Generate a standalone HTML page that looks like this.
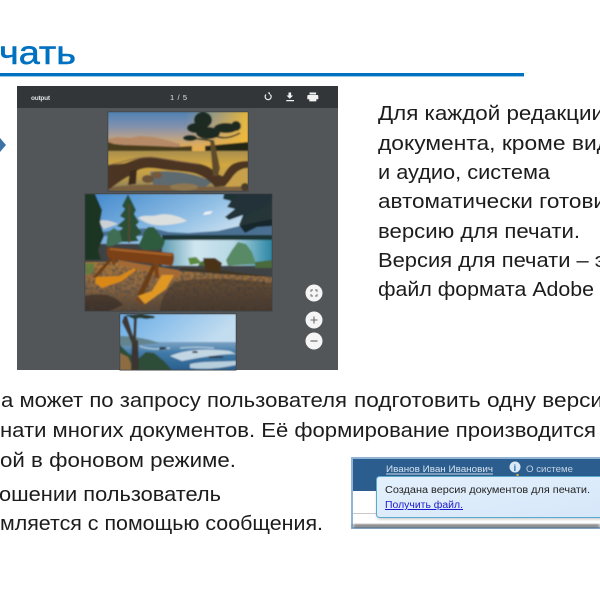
<!DOCTYPE html>
<html><head><meta charset="utf-8"><style>
html,body{margin:0;padding:0;background:#fff;width:600px;height:600px;overflow:hidden}
svg{display:block}
text{font-family:"Liberation Sans",sans-serif}
.t{font-size:20.5px;fill:#1c1c1c;filter:url(#tb)}
</style></head><body>
<svg width="600" height="600" viewBox="0 0 600 600" xmlns="http://www.w3.org/2000/svg">
<defs>
<filter id="tb" x="-2%" y="-20%" width="104%" height="140%"><feGaussianBlur stdDeviation="0.3"/></filter>
<filter id="b" x="-5%" y="-5%" width="110%" height="110%"><feGaussianBlur stdDeviation="0.7"/></filter>
<filter id="sh" x="-5%" y="-30%" width="110%" height="160%"><feGaussianBlur stdDeviation="1.5"/></filter>
<filter id="n" x="0" y="0" width="100%" height="100%"><feTurbulence type="fractalNoise" baseFrequency=".32" numOctaves="2" seed="4"/><feColorMatrix values="0 0 0 0 .1 0 0 0 0 .08 0 0 0 0 .06 0 0 0 3 -1.2"/></filter>
<linearGradient id="s1" x1="0" y1="0" x2="0" y2="1"><stop offset="0" stop-color="#4f82b4"/><stop offset=".35" stop-color="#7f90ad"/><stop offset=".62" stop-color="#b2a08e"/><stop offset=".85" stop-color="#dcaa5c"/><stop offset="1" stop-color="#e8ae48"/></linearGradient>
<linearGradient id="s1b" x1="0" y1="0" x2="1" y2="0"><stop offset=".55" stop-color="#f0b040" stop-opacity="0"/><stop offset="1" stop-color="#f6bd30" stop-opacity=".9"/></linearGradient>
<linearGradient id="w1" x1="0" y1="0" x2="0" y2="1"><stop offset="0" stop-color="#a88e4e"/><stop offset=".35" stop-color="#d3a740"/><stop offset=".7" stop-color="#b89a4c"/><stop offset="1" stop-color="#7c7460"/></linearGradient>
<linearGradient id="s2" x1="0" y1="0" x2="1" y2="0.5"><stop offset="0" stop-color="#3f86cc"/><stop offset=".6" stop-color="#8dbde4"/><stop offset="1" stop-color="#d5e6f2"/></linearGradient>
<linearGradient id="w2" x1="0" y1="0" x2="1" y2="0"><stop offset="0" stop-color="#5c9ab0"/><stop offset=".3" stop-color="#cfe6f0"/><stop offset=".65" stop-color="#b6d8e4"/><stop offset="1" stop-color="#2a86a4"/></linearGradient>
<linearGradient id="g2" x1="0" y1="0" x2="0" y2="1"><stop offset="0" stop-color="#b07836"/><stop offset=".5" stop-color="#8c6640"/><stop offset="1" stop-color="#54402f"/></linearGradient>
<linearGradient id="s3" x1="0" y1="0" x2="1" y2="0.3"><stop offset="0" stop-color="#68ace6"/><stop offset="1" stop-color="#c3ddf0"/></linearGradient>
<linearGradient id="w3" x1="0" y1="0" x2="0" y2="1"><stop offset="0" stop-color="#7ba2c4"/><stop offset=".4" stop-color="#3f78a6"/><stop offset="1" stop-color="#2a5f8e"/></linearGradient>
<linearGradient id="note" x1="0" y1="0" x2="1" y2="1"><stop offset="0" stop-color="#e4f0fc"/><stop offset="1" stop-color="#d6e7f9"/></linearGradient>
<clipPath id="c1"><rect x="108" y="112" width="140" height="79"/></clipPath>
<clipPath id="c2"><rect x="85" y="194" width="187" height="117"/></clipPath>
<clipPath id="c3"><rect x="120" y="314" width="116" height="56"/></clipPath>
<clipPath id="gr"><path d="M85 263l30 0 60 8 97 6v34H85z"/></clipPath>
</defs>

<!-- title -->
<text x="-1" y="64" font-size="33" fill="#0070c0" stroke="#0070c0" stroke-width=".5" textLength="77" lengthAdjust="spacingAndGlyphs">чать</text>
<rect x="0" y="73" width="524" height="3.4" fill="#0070c0"/>
<path d="M0 138 L6 145 L0 152Z" fill="#3d72a8"/>

<!-- viewer -->
<rect x="17" y="86" width="321" height="284" fill="#525659"/>
<rect x="17" y="86" width="321" height="22" fill="#323639"/>
<text x="31" y="100" font-size="6.5" font-weight="bold" fill="#e0e0e0" textLength="19">output</text>
<text x="170" y="100" font-size="7.5" fill="#e4e4e4" textLength="17" xml:space="preserve">1 / 5</text>
<g fill="none" stroke="#eee" stroke-width="1.2"><path d="M270.3 94.6 A3 3 0 1 1 266 94.6"/></g>
<path d="M267.5 92.5 L270 92.5 L270 95Z" fill="#eee"/>
<path d="M288.5 92.5h2.6v3h2l-3.3 3.2-3.3-3.2h2zM286.3 100h7.7v1.2h-7.7z" fill="#f2f2f2"/>
<path d="M309.5 92.5h6.6v2h-6.6zM308.3 95h9c.6 0 1 .4 1 1v3.2h-2v2.2h-7v-2.2h-2V96c0-.6.4-1 1-1z" fill="#f2f2f2"/>

<!-- photo 1 -->
<rect x="107.5" y="111.5" width="141" height="80" fill="#3f4245"/>
<g clip-path="url(#c1)"><g filter="url(#b)">
<rect x="108" y="112" width="140" height="40" fill="url(#s1)"/>
<rect x="108" y="112" width="140" height="40" fill="url(#s1b)"/>
<path d="M108 139l10-2 12 1 10-2 14 1 12 3 14 4v6H108z" fill="#b68a66"/>
<path d="M108 142l6 2 10 1 30 1 22 1 16-1v5H108z" fill="#4a3d1c"/>
<path d="M205 146l43-4v9h-43z" fill="#232818"/>
<rect x="108" y="151" width="140" height="40" fill="url(#w1)"/>
<path d="M150 172c18-2 44 0 62 10l-8 6h-50z" fill="#5d6a70"/>
<path d="M222 172c8-2 18-4 26-3v18h-22z" fill="#c8a04c"/>
<path d="M108 188c14-3 36-4 58-3 20 1 50 3 82 1v5H108z" fill="#7a6040"/>
<path d="M108 165c8-1 14-1 18-2 8-3 16-6 24-6 10 0 24 5 36 5 10 1 20 2 27 8 4 3 7 6 10 6 3-5 6-10 10-12 4-2 9-3 15-3v7c-6 0-11 3-15 8-3 4-5 7-8 10l-10 1c-4-5-10-10-18-13-8-3-24-3-36-5-6-1-14-2-20 0-6 2-8 5-10 6-8 4-16 10-23 15z" fill="#4c3524"/>
<path d="M108 165c12-2 28-8 42-8 14 1 30 5 50 7" fill="none" stroke="#86684c" stroke-width="1"/>
<path d="M130 171l7-2-1 15-8 1z" fill="#3e2c1c"/>
<ellipse cx="157" cy="175" rx="5" ry="3.5" fill="#76583a"/><ellipse cx="148" cy="179" rx="6" ry="4" fill="#6a5238"/><ellipse cx="184" cy="187" rx="14" ry="3.5" fill="#8f7850"/><ellipse cx="245" cy="187" rx="4" ry="4" fill="#4a3a2a"/>
<path d="M210 140l4 0 6 28-2 8h-5z" fill="#5e4c2c"/>
<g fill="#1e2a20">
<ellipse cx="203" cy="120" rx="9" ry="8"/><ellipse cx="196" cy="128" rx="9" ry="5"/><ellipse cx="190" cy="138" rx="7" ry="3"/><ellipse cx="208" cy="133" rx="12" ry="6"/><ellipse cx="226" cy="128" rx="12" ry="5"/><ellipse cx="236" cy="126" rx="5" ry="5"/>
</g>
<path d="M212 135c8 3 15 5 28-2M190 138c6 1 14 1 22 3" stroke="#1e2a20" stroke-width="1.5" fill="none"/>
</g></g>

<!-- photo 2 -->
<rect x="84.5" y="193.5" width="188" height="118" fill="#3f4245"/>
<g clip-path="url(#c2)"><g filter="url(#b)">
<rect x="85" y="194" width="187" height="50" fill="url(#s2)"/>
<path d="M205 212l8-1-3 3-7 1z" fill="#f2f4f6"/>
<path d="M138 218c6-4 14-1 20-3 8-2 20 0 29 6-8 3-22 5-32 4-8-1-12-4-17-7z" fill="#ebe6dd" opacity=".85"/>
<path d="M98 221c6-2 14 0 20 3l-14 5z" fill="#e6dcd5" opacity=".8"/>
<path d="M100 232l30-3 22-1 16 4 20 1 30-2 30-7 24-5v17H100z" fill="#486f92"/>
<rect x="162" y="235" width="110" height="5" fill="#1c3436"/>
<rect x="162" y="240" width="110" height="26" fill="url(#w2)"/>
<path d="M85 194h10l7 16-2 12 4 14-6 14 3 10H85z" fill="#1b3624"/>
<path d="M128 194l5 10 3 6-2 4 5 8-3 3 6 8-6 4 3 4-11 1-11 0 4-4-5-4 7-6-6-2 8-7-5-3 5-7-3-3z" fill="#2c4f34"/>
<path d="M128.3 205h1.5v38h-1.500z" fill="#5b4632"/>
<path d="M148 227l6 0 6 8 5 6-2 6-5 3-14 0-6-4 4-8 2-6z" fill="#2e5a3c"/>
<path d="M108 232l6-4 6 4 2 10-10 4-6 0z" fill="#3f6e55"/>
<path d="M272 194h-48l-1 5 8 2-4 6 8 2-10 8 4 3 14-5-4 10 6 8 12-6 15-1z" fill="#0f1d1e" opacity=".88"/>
<path d="M232 250l6-8 8 2 6 8 4 12-28 2-2-6z" fill="#588a66"/>
<path d="M200 262c6-3 12-3 15-1l7 5H198zM255 262l17-2v8h-17z" fill="#4a6a3a"/>
<path d="M85 262h30l60 9 97 6v34H85z" fill="url(#g2)"/>
<rect x="85" y="262" width="187" height="50" filter="url(#n)" clip-path="url(#gr)"/>
<path d="M175 282c30-6 65-3 97 1v28h-112c0-10 6-22 15-29z" fill="#362b26" opacity=".5"/>
<path d="M85 296c16-4 30-1 38 9l-14 6H85z" fill="#2a2220" opacity=".55"/>
<path d="M180 268l40 2 52 7-52-3-40-4z" fill="#3e3428"/>
<path d="M203 258h12l7 5-2 8h-14z" fill="#4a3014"/>
<path d="M85 263h10l-2 10-8 2z" fill="#5c8040" opacity=".8"/>
<path d="M188 258l8-1 6 6-12 2z" fill="#5c8a3c"/>
<!-- bench -->
<path d="M108 247l65 6c2 4 1 9-1 13l-62-7c-4-3-4-9-2-12z" fill="#7c4016"/>
<path d="M110 249l62 6" stroke="#a8642a" stroke-width="2" fill="none"/>
<path d="M118 260l60 10c3 1 3 4 2 7l-2 1-60-13z" fill="#a46a36"/>
<path d="M112 256l3 1-19 21-3-1z" fill="#6a3c12"/>
<path d="M111 250l4 0 1 14-4 0z" fill="#7a4214"/>
<path d="M96 277l24-1 14-8 2 2-14 11-20 7-7-5z" fill="#d98818"/>
<path d="M153 258l5 0 1 20-4 0z" fill="#7a4214"/>
<path d="M152 265l4 1-13 30-6-1z" fill="#6a3c12"/>
<path d="M138 296l14-5 10-16 12 0-8 14-21 15z" fill="#e09820"/>
<path d="M137 297l6 7 -2 0-5-4z" fill="#7a4214"/>
</g></g>

<!-- photo 3 -->
<rect x="119.500" y="313.500" width="117" height="57" fill="#3f4245"/>
<g clip-path="url(#c3)"><g filter="url(#b)">
<rect x="120" y="314" width="116" height="30" fill="url(#s3)"/>
<rect x="120" y="342" width="116" height="28" fill="url(#w3)"/>
<path d="M120 336c10 0 22 2 30 4l10 3-30 3-10 0z" fill="#63848f"/>
<path d="M170 356c14-6 34-8 60-5l6 3c-14 0-24 2-38 4l-16 3z" fill="#dbe7ef" opacity=".85"/>
<path d="M190 364c14-3 24-2 46-3v4c-14 3-30 5-46 3z" fill="#cfe0ea" opacity=".85"/>
<path d="M140 346c6 3 18 4 30 2M180 348c10-1 22-1 34 0" stroke="#a8c4d8" stroke-width="1.5" fill="none"/>
<path d="M160 347h5l2 2-8 1zM193 351h4l1 2h-6zM209 356h13l2 2-15 0z" fill="#2f3b44"/>
<path d="M120 345l8 8 10 6 8-7 8 1 10 8 8 9h-52z" fill="#2e4e38"/>
<path d="M120 353l8 4 6 13h-14z" fill="#8e6c42"/>
<path d="M132 340h6l1 30h-8z" fill="#3a3430"/>
<path d="M124 316l3 0 6 20 4 6-5 2-4-10-6-12z" fill="#3e3833"/>
<path d="M134 315h3l-1 27h-3z" fill="#3e3833"/>
<path d="M125 315l17-1 12 2 1 2-9 1-6-1-6 1z" fill="#2c3a30"/>
</g></g>

<!-- round buttons -->
<circle cx="314" cy="293" r="8.5" fill="#f5f5f5"/>
<path d="M311 292v-2h2M315 290h2v2M317 294v2h-2M313 296h-2v-2" fill="none" stroke="#6a6a6a" stroke-width=".9"/>
<circle cx="314" cy="320" r="8.500" fill="#f5f5f5"/>
<path d="M310.500 320h7M314 316.500v7" stroke="#6a6a6a" stroke-width="1.1"/>
<circle cx="314" cy="341" r="8.500" fill="#f5f5f5"/>
<path d="M310.500 341h7" stroke="#6a6a6a" stroke-width="1.2"/>

<!-- right text -->
<text class="t" x="378" y="120" textLength="226" lengthAdjust="spacingAndGlyphs">Для каждой редакции</text>
<text class="t" x="378" y="150" textLength="232" lengthAdjust="spacingAndGlyphs">документа, кроме вид</text>
<text class="t" x="378" y="179" textLength="172" lengthAdjust="spacingAndGlyphs">и аудио, система</text>
<text class="t" x="378" y="208" textLength="228" lengthAdjust="spacingAndGlyphs">автоматически готови</text>
<text class="t" x="378" y="238" textLength="202" lengthAdjust="spacingAndGlyphs">версию для печати.</text>
<text class="t" x="378" y="267" textLength="228" lengthAdjust="spacingAndGlyphs">Версия для печати – э</text>
<text class="t" x="378" y="296" textLength="216" lengthAdjust="spacingAndGlyphs">файл формата Adobe</text>

<!-- bottom text -->
<text class="t" x="1" y="407" textLength="346" lengthAdjust="spacingAndGlyphs">а может по запросу пользователя</text>
<text class="t" x="354" y="407" textLength="266" lengthAdjust="spacingAndGlyphs">подготовить одну версию</text>
<text class="t" x="0" y="437" textLength="596" lengthAdjust="spacingAndGlyphs">нати многих документов. Её формирование производится</text>
<text class="t" x="0" y="467" textLength="236" lengthAdjust="spacingAndGlyphs">ой в фоновом режиме.</text>
<text class="t" x="-1" y="501" textLength="222" lengthAdjust="spacingAndGlyphs">ошении пользователь</text>
<text class="t" x="0" y="530" textLength="323" lengthAdjust="spacingAndGlyphs">мляется с помощью сообщения.</text>

<!-- notification -->
<rect x="351" y="457" width="249" height="72" fill="#8fb4d6"/>
<rect x="353" y="459" width="247" height="68" fill="#fff"/>
<rect x="353" y="459" width="247" height="32" fill="#2b5d8f"/>
<rect x="353" y="513" width="247" height="1" fill="#c8c8c8"/>
<rect x="353" y="524.500" width="247" height="3" fill="#2e2e2e" opacity=".85" filter="url(#sh)"/>
<text x="386" y="472" font-size="9.6" fill="#d7e3ef" textLength="107" lengthAdjust="spacingAndGlyphs">Иванов Иван Иванович</text>
<rect x="386" y="473.500" width="107" height="1" fill="#cfdcea"/>
<circle cx="515" cy="467" r="5.500" fill="#dbe9f7"/>
<text x="513.600" y="471" font-size="9" font-weight="bold" fill="#2b6fb0">i</text>
<circle cx="517.500" cy="475" r="1.200" fill="#e0b040"/>
<text x="526" y="472" font-size="9.600" fill="#c2d2e2" textLength="47" lengthAdjust="spacingAndGlyphs">О системе</text>
<rect x="377" y="478" width="230" height="41" rx="3" fill="#000" opacity=".25" filter="url(#sh)"/>
<rect x="376.500" y="476.500" width="230" height="41" rx="3" fill="url(#note)" stroke="#5aaad0" stroke-width="1"/>
<text x="385" y="493" font-size="10" fill="#222" textLength="205" lengthAdjust="spacingAndGlyphs">Создана версия документов для печати.</text>
<text x="385" y="508" font-size="10" fill="#1a1acc" text-decoration="underline" textLength="78" lengthAdjust="spacingAndGlyphs">Получить файл.</text>
</svg>
</body></html>
